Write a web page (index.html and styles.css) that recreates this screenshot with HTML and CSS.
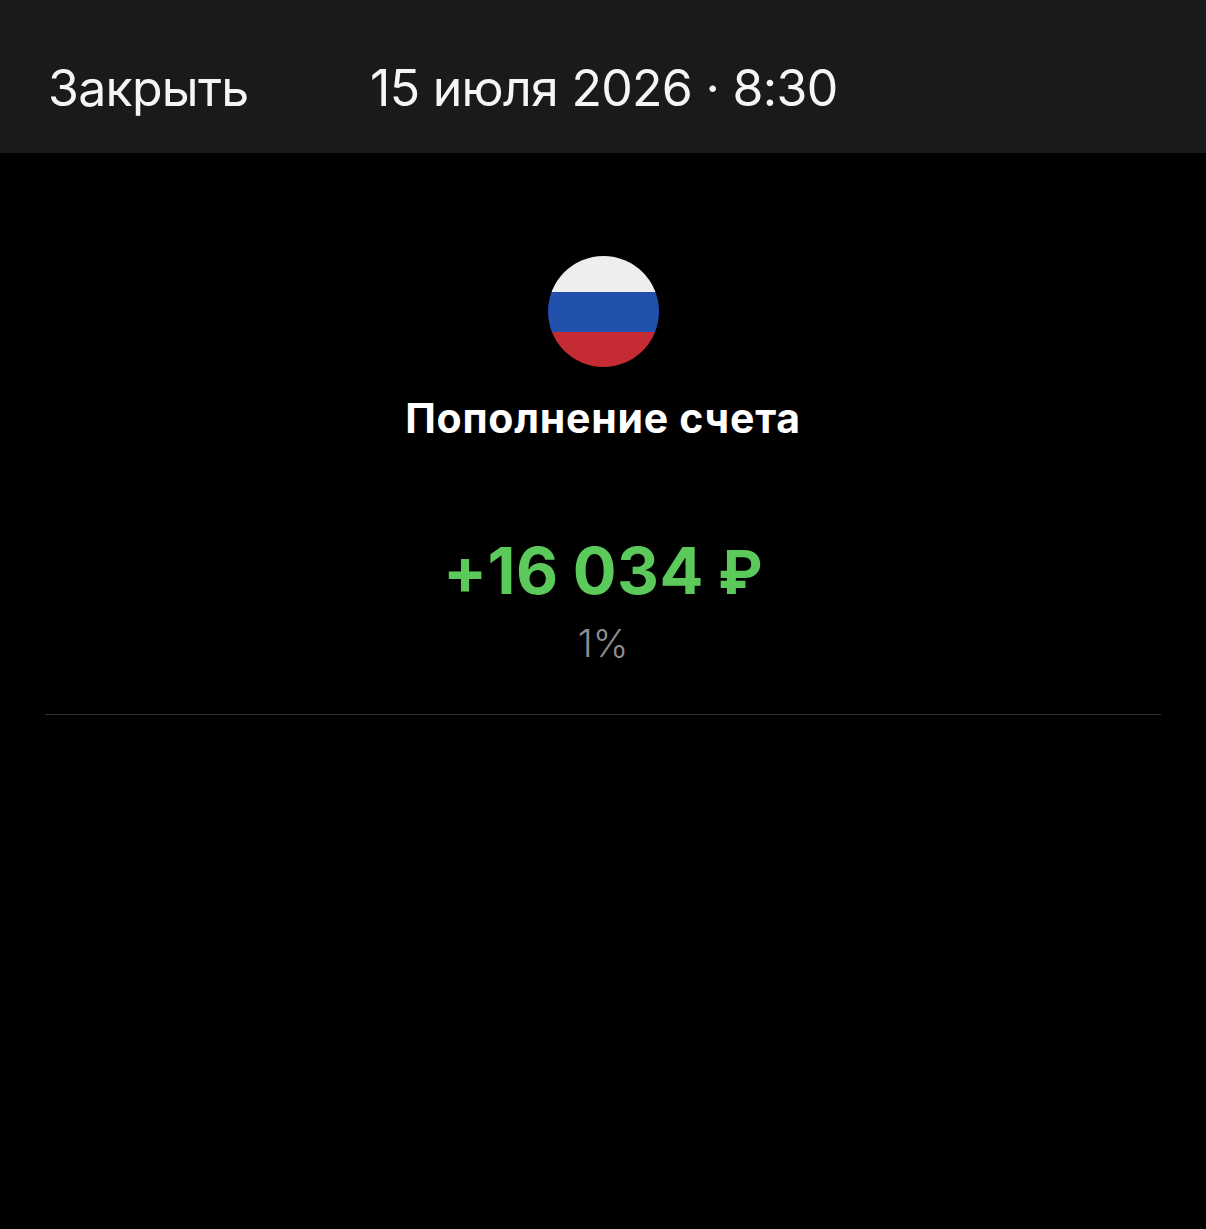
FILE: index.html
```html
<!DOCTYPE html>
<html lang="ru">
<head>
    <meta charset="UTF-8">
    <title>Пополнение счета</title>
    <link rel="stylesheet" href="styles.css">
</head>
<body>
    <header class="top-bar">
        <span class="close-link">Закрыть</span>
        <span class="top-date">15 июля 2026 · 8:30</span>
    </header>
    <main class="details">
        <div class="flag">
            <div class="flag-white"></div>
            <div class="flag-blue"></div>
            <div class="flag-red"></div>
        </div>
        <h1 class="title">Пополнение счета</h1>
        <div class="amount">+16 034 <span class="currency">₽</span></div>
        <div class="percent">1%</div>
        <div class="divider"></div>
    </main>
</body>
</html>
```

FILE: styles.css
```css
* {
    margin: 0;
    padding: 0;
    box-sizing: border-box;
}

body {
    min-height: 1229px;
    background-color: #000;
    color: #fff;
    font-family: "Inter", "Liberation Sans", sans-serif;
}

.top-bar {
    display: flex;
    align-items: center;
    height: 153px;
    padding: 22px 48px 0;
    background-color: #1a1a1a;
    font-size: 50px;
    font-weight: 400;
    letter-spacing: -0.7px;
    color: #f5f5f5;
}

.close-link {
    width: 322px;
}

.details {
    display: flex;
    flex-direction: column;
    align-items: center;
    padding: 103px 45px 0;
}

.flag {
    display: flex;
    flex-direction: column;
    width: 111px;
    height: 111px;
    border-radius: 50%;
    overflow: hidden;
}

.flag-white {
    height: 36px;
    background-color: #eeeeee;
}

.flag-blue {
    height: 40px;
    background-color: #2150ad;
}

.flag-red {
    height: 35px;
    background-color: #c42b32;
}

.title {
    margin-top: 26px;
    font-size: 41px;
    line-height: 50px;
    font-weight: 700;
    letter-spacing: 0.75px;
}

.amount {
    margin-top: 89px;
    font-size: 65px;
    line-height: 78px;
    font-weight: 700;
    letter-spacing: 0.4px;
    word-spacing: -1.5px;
    color: #5bca5a;
}

.currency {
    font-size: 60px;
    line-height: 1;
}

.percent {
    margin-top: 11px;
    font-size: 38px;
    line-height: 44px;
    font-weight: 300;
    color: #8e8e8e;
}

.divider {
    width: 100%;
    height: 1px;
    margin-top: 49px;
    background-color: #333;
}
```
